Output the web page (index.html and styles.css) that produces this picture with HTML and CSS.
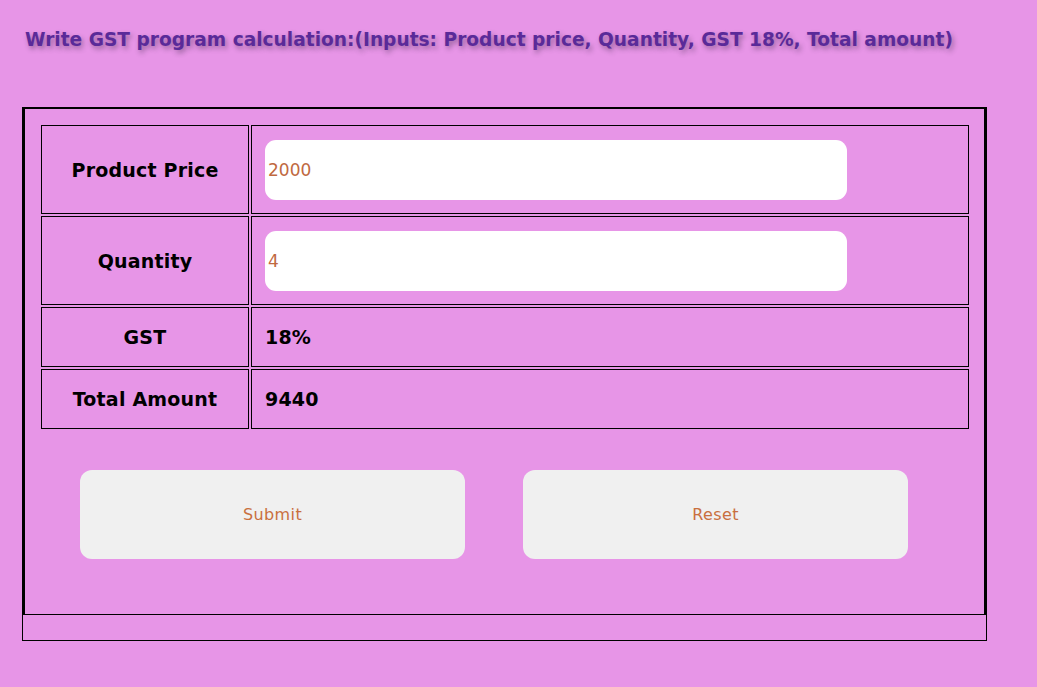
FILE: index.html
```html
<!DOCTYPE html>
<html lang="en">
<head>
<meta charset="utf-8">
<title>GST Calculator</title>
<link rel="stylesheet" href="styles.css">
</head>
<body>
<h1 class="title">Write GST program calculation:(Inputs: Product price, Quantity, GST 18%, Total amount)</h1>
<div class="frame">
  <form class="panel">
    <table class="grid">
      <tr class="row-tall">
        <th class="label">Product Price</th>
        <td class="value"><input class="field" type="text" value="2000"></td>
      </tr>
      <tr class="row-tall">
        <th class="label">Quantity</th>
        <td class="value"><input class="field" type="text" value="4"></td>
      </tr>
      <tr class="row-short">
        <th class="label">GST</th>
        <td class="value">18%</td>
      </tr>
      <tr class="row-short">
        <th class="label">Total Amount</th>
        <td class="value">9440</td>
      </tr>
    </table>
    <div class="actions">
      <button class="btn" type="button">Submit</button>
      <button class="btn" type="button">Reset</button>
    </div>
  </form>
  <div class="spacer"></div>
</div>
</body>
</html>
```

FILE: styles.css
```css
html, body {
  margin: 0;
  padding: 0;
}
body {
  background: #e795e7;
  font-family: "DejaVu Sans", "Open Sans", sans-serif;
  color: #000;
}
.title {
  margin: 0;
  padding: 29px 0 0 25px;
  height: 107px;
  box-sizing: border-box;
  font-size: 18.6px;
  font-weight: 700;
  color: #5a2a99;
  text-shadow: 2px 3px 5px rgba(60, 40, 70, 0.45);
  white-space: nowrap;
}
.frame {
  margin-left: 22px;
  width: 965px;
  box-sizing: border-box;
  border: 1px solid #000;
}
.panel {
  margin: -1px 0 0 0;
  border: 2px solid #000;
  border-bottom-width: 1px;
  padding: 16px 15px 55px 16px;
}
.grid {
  width: 932px;
  border-collapse: separate;
  border-spacing: 2px;
  margin: -2px;
}
.label, .value {
  border: 1px solid #000;
  padding: 0 13px;
  font-size: 19px;
  font-weight: 700;
  letter-spacing: 0.2px;
  vertical-align: middle;
}
.label {
  width: 180px;
  text-align: center;
}
.value {
  text-align: left;
}
.row-tall .label, .row-tall .value {
  height: 87px;
}
.row-short .label, .row-short .value {
  height: 58px;
}
.field {
  display: block;
  width: 582px;
  height: 60px;
  box-sizing: border-box;
  border: none;
  border-radius: 11px;
  background: #fff;
  padding: 0 3px;
  font-family: inherit;
  font-size: 17px;
  letter-spacing: 0;
  color: #c0693f;
  outline: none;
}
.actions {
  display: flex;
  gap: 58px;
  padding-left: 39px;
  margin-top: 41px;
}
.btn {
  width: 385px;
  height: 89px;
  border: none;
  border-radius: 12px;
  background: #f0f0f0;
  font-family: inherit;
  font-size: 16px;
  letter-spacing: 0.4px;
  color: #c96f3e;
}
.spacer {
  height: 25px;
}
```
